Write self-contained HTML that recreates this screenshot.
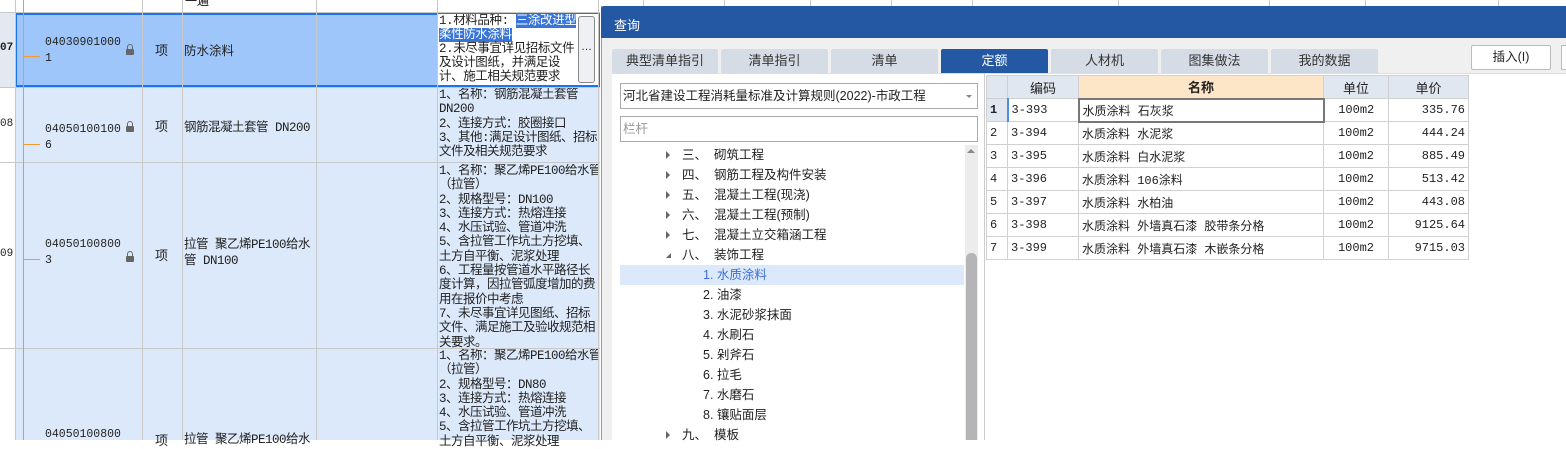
<!DOCTYPE html>
<html><head><meta charset="utf-8"><style>
*{margin:0;padding:0;box-sizing:border-box}
body{width:1566px;height:440px;overflow:hidden;background:#fff;font-family:"Liberation Sans","Noto Sans CJK SC",sans-serif;font-size:12px;color:#222;position:relative}
.a{position:absolute}
.m{font-family:"Liberation Mono","Noto Sans CJK SC",monospace;}
.vl{position:absolute;width:1px;background:#c8c8c8}
.hl{position:absolute;height:1px;background:#c8c8c8}
.desc{position:absolute;left:439px;font-size:12.5px;line-height:14.3px;font-family:"Liberation Mono","Noto Sans CJK SC",monospace;letter-spacing:-0.5px;white-space:nowrap;overflow:hidden;width:159px}
.lock{position:absolute;width:8px;height:6px;background:#666;border-radius:1px}
.lock:before{content:"";position:absolute;left:1px;top:-5px;width:4px;height:5px;border:1px solid #666;border-bottom:none;border-radius:3px 3px 0 0}
.tab{position:absolute;top:49px;height:24px;background:#d6dce6;text-align:center;line-height:24px;font-size:13px;color:#333;border-radius:2px 2px 0 0}
.tr{position:absolute;font-size:12.5px;height:20px;line-height:20px}
.tri{position:absolute;width:0;height:0;border-top:4px solid transparent;border-bottom:4px solid transparent;border-left:4px solid #666;top:6px}
.g td{border:1px solid #d0d0d0;height:23px;padding:0 3px;font-size:12px}
</style></head><body>
<div class="a" style="left:15px;top:13px;width:585px;height:427px;background:#dce9fb"></div>
<div class="a" style="left:0;top:13px;width:15px;height:74px;background:#e4e8f0"></div>
<div class="a" style="left:15px;top:13px;width:585px;height:74px;background:#9fc6fa;border:2px solid #1a73f0"></div>
<div class="a" style="left:437px;top:14px;width:162px;height:71px;background:#fff"></div>
<div class="vl" style="left:15px;top:0;height:440px"></div>
<div class="vl" style="left:142px;top:0;height:440px"></div>
<div class="vl" style="left:182px;top:0;height:440px"></div>
<div class="vl" style="left:316px;top:0;height:440px"></div>
<div class="vl" style="left:437px;top:0;height:440px"></div>
<div class="vl" style="left:598px;top:0;height:440px"></div>
<div class="hl" style="left:0;top:12px;width:600px"></div>
<div class="hl" style="left:0;top:87px;width:600px"></div>
<div class="hl" style="left:0;top:162px;width:600px"></div>
<div class="hl" style="left:0;top:348px;width:600px"></div>
<div class="a" style="left:23px;top:0;width:1px;height:440px;background:#f39a2e;z-index:2"></div>
<div class="a" style="left:185px;top:-8px;font-size:12px">一遍</div>
<div class="a m" style="left:0;top:42px;font-weight:bold;font-size:11px">07</div>
<div class="a m" style="left:0;top:118px;font-size:11px">08</div>
<div class="a m" style="left:0;top:248px;font-size:11px">09</div>
<div class="a" style="left:24px;top:56px;width:16px;height:1px;background:#f39a2e;z-index:2"></div>
<div class="a" style="left:24px;top:144px;width:16px;height:1px;background:#f39a2e;z-index:2"></div>
<div class="a" style="left:24px;top:259px;width:16px;height:1px;background:#f39a2e;z-index:2"></div>
<div class="a m" style="left:45px;top:35px;font-size:11.5px;line-height:16px">04030901000<br>1</div>
<div class="a m" style="left:45px;top:122px;font-size:11.5px;line-height:16px">04050100100<br>6</div>
<div class="a m" style="left:45px;top:237px;font-size:11.5px;line-height:16px">04050100800<br>3</div>
<div class="a m" style="left:45px;top:427px;font-size:11.5px;line-height:16px">04050100800</div>
<div class="lock" style="left:126px;top:49px"></div>
<div class="lock" style="left:126px;top:126px"></div>
<div class="lock" style="left:126px;top:256px"></div>
<div class="a" style="left:155px;top:40px;font-size:13px">项</div>
<div class="a" style="left:155px;top:116px;font-size:13px">项</div>
<div class="a" style="left:155px;top:245px;font-size:13px">项</div>
<div class="a" style="left:155px;top:430px;font-size:13px">项</div>
<div class="a" style="left:184px;top:40px;font-size:12.5px">防水涂料</div>
<div class="a m" style="left:184px;top:116px;font-size:12.5px;letter-spacing:-0.5px">钢筋混凝土套管 DN200</div>
<div class="a m" style="left:184px;top:237px;font-size:12.5px;line-height:16px;letter-spacing:-0.5px">拉管 聚乙烯PE100给水<br>管 DN100</div>
<div class="a m" style="left:184px;top:428px;font-size:12.5px;letter-spacing:-0.5px">拉管 聚乙烯PE100给水</div>
<div class="desc" style="top:14px;width:138px;line-height:14px;font-size:12.5px;letter-spacing:-0.4px">1.材料品种: <span style="background:#3875d7;color:#fff">三涂改进型</span><br><span style="background:#3875d7;color:#fff">柔性防水涂料</span><br>2.未尽事宜详见招标文件<br>及设计图纸，并满足设<br>计、施工相关规范要求</div>
<div class="a" style="left:578px;top:16px;width:17px;height:67px;border:1px solid #888;border-radius:3px;background:#eef0f4;text-align:center;line-height:60px;font-size:11px">…</div>
<div class="desc" style="top:88px">1、名称：钢筋混凝土套管<br>DN200<br>2、连接方式：胶圈接口<br>3、其他:满足设计图纸、招标<br>文件及相关规范要求</div>
<div class="desc" style="top:164px">1、名称：聚乙烯PE100给水管<br>（拉管）<br>2、规格型号：DN100<br>3、连接方式：热熔连接<br>4、水压试验、管道冲洗<br>5、含拉管工作坑土方挖填、<br>土方自平衡、泥浆处理<br>6、工程量按管道水平路径长<br>度计算，因拉管弧度增加的费<br>用在报价中考虑<br>7、未尽事宜详见图纸、招标<br>文件、满足施工及验收规范相<br>关要求。</div>
<div class="desc" style="top:349px">1、名称：聚乙烯PE100给水管<br>（拉管）<br>2、规格型号：DN80<br>3、连接方式：热熔连接<br>4、水压试验、管道冲洗<br>5、含拉管工作坑土方挖填、<br>土方自平衡、泥浆处理</div>
<div class="vl" style="left:643px;top:0;height:7px"></div>
<div class="vl" style="left:724px;top:0;height:7px"></div>
<div class="vl" style="left:810px;top:0;height:7px"></div>
<div class="vl" style="left:891px;top:0;height:7px"></div>
<div class="vl" style="left:972px;top:0;height:7px"></div>
<div class="vl" style="left:1118px;top:0;height:7px"></div>
<div class="vl" style="left:1269px;top:0;height:7px"></div>
<div class="vl" style="left:1365px;top:0;height:7px"></div>
<div class="vl" style="left:1498px;top:0;height:7px"></div>
<div class="a" style="left:601px;top:6px;width:965px;height:434px;background:#f0f0f0;border-left:1px solid #999;z-index:3"></div>
<div style="position:absolute;left:0;top:0;width:1566px;height:440px;z-index:4">
<div class="a" style="left:601px;top:6px;width:965px;height:32px;background:#2558a3;border-radius:3px 0 0 0"></div>
<div class="a" style="left:614px;top:15px;color:#fff;font-size:13px">查询</div>
<div class="tab" style="left:612px;width:106px">典型清单指引</div>
<div class="tab" style="left:721px;width:107px">清单指引</div>
<div class="tab" style="left:831px;width:107px">清单</div>
<div class="tab" style="left:941px;width:107px;background:#2558a3;color:#fff">定额</div>
<div class="tab" style="left:1051px;width:107px">人材机</div>
<div class="tab" style="left:1161px;width:107px">图集做法</div>
<div class="tab" style="left:1271px;width:107px">我的数据</div>
<div class="a" style="left:1471px;top:45px;width:80px;height:25px;border:1px solid #bbb;border-radius:2px;background:#fff;text-align:center;line-height:23px;font-size:12.5px">插入(I)</div>
<div class="a" style="left:1561px;top:45px;width:10px;height:25px;border:1px solid #bbb;background:#fff"></div>
<div class="a" style="left:612px;top:73px;width:954px;height:367px;background:#fff"></div>
<div class="hl" style="left:612px;top:73px;width:954px;background:#ddd"></div>
<div class="a" style="left:620px;top:83px;width:358px;height:26px;border:1px solid #aaa;font-size:12.5px;line-height:24px;padding-left:2px">河北省建设工程消耗量标准及计算规则(2022)-市政工程</div>
<div class="a" style="left:966px;top:95px;border-left:3px solid transparent;border-right:3px solid transparent;border-top:3px solid #888"></div>
<div class="a" style="left:620px;top:116px;width:358px;height:26px;border:1px solid #aaa;font-size:12.5px;line-height:24px;padding-left:2px;color:#999">栏杆</div>
<div class="a" style="left:965px;top:145px;width:13px;height:295px;background:#ececec"></div>
<div class="a" style="left:966px;top:253px;width:11px;height:187px;background:#b5b5b8;border-radius:5px 5px 0 0"></div>
<div class="a" style="left:967px;top:149px;border-left:4px solid transparent;border-right:4px solid transparent;border-bottom:4px solid #888"></div>
<div class="a" style="left:620px;top:265px;width:344px;height:20px;background:#dce9fb"></div>
<div class="tr" style="left:666px;top:145px"><i class="tri"></i><span style="margin-left:16px">三、&nbsp; 砌筑工程</span></div>
<div class="tr" style="left:666px;top:165px"><i class="tri"></i><span style="margin-left:16px">四、&nbsp; 钢筋工程及构件安装</span></div>
<div class="tr" style="left:666px;top:185px"><i class="tri"></i><span style="margin-left:16px">五、&nbsp; 混凝土工程(现浇)</span></div>
<div class="tr" style="left:666px;top:205px"><i class="tri"></i><span style="margin-left:16px">六、&nbsp; 混凝土工程(预制)</span></div>
<div class="tr" style="left:666px;top:225px"><i class="tri"></i><span style="margin-left:16px">七、&nbsp; 混凝土立交箱涵工程</span></div>
<div class="tr" style="left:666px;top:245px"><i class="a" style="left:0;top:8px;border-left:5px solid transparent;border-bottom:5px solid #666"></i><span style="margin-left:16px">八、&nbsp; 装饰工程</span></div>
<div class="tr" style="left:703px;top:265px;color:#3a6fd8">1. 水质涂料</div>
<div class="tr" style="left:703px;top:285px">2. 油漆</div>
<div class="tr" style="left:703px;top:305px">3. 水泥砂浆抹面</div>
<div class="tr" style="left:703px;top:325px">4. 水刷石</div>
<div class="tr" style="left:703px;top:345px">5. 剁斧石</div>
<div class="tr" style="left:703px;top:365px">6. 拉毛</div>
<div class="tr" style="left:703px;top:385px">7. 水磨石</div>
<div class="tr" style="left:703px;top:405px">8. 镶贴面层</div>
<div class="tr" style="left:666px;top:425px"><i class="tri"></i><span style="margin-left:16px">九、&nbsp; 模板</span></div>
<div class="vl" style="left:984px;top:73px;height:367px;background:#ccc"></div>
<table class="g a" style="left:986px;top:75px;border-collapse:collapse;font-family:'Liberation Mono','Noto Sans CJK SC',monospace">
<tr style="background:#e1e7f0;font-size:13px"><td style="width:21px;height:22px"></td><td style="width:71px;text-align:center;font-size:13px">编码</td><td style="width:245px;text-align:center;background:#fde6c7;font-weight:bold;font-size:13px">名称</td><td style="width:65px;text-align:center;font-size:13px">单位</td><td style="width:80px;text-align:center;font-size:13px">单价</td></tr>
<tr><td style="background:#e1e7f0;font-weight:bold">1</td><td style="border-left:2px solid #4a90e2">3-393</td><td style="border:2px solid #777">水质涂料 石灰浆</td><td style="text-align:center">100m2</td><td style="text-align:right">335.76</td></tr>
<tr><td>2</td><td>3-394</td><td>水质涂料 水泥浆</td><td style="text-align:center">100m2</td><td style="text-align:right">444.24</td></tr>
<tr><td>3</td><td>3-395</td><td>水质涂料 白水泥浆</td><td style="text-align:center">100m2</td><td style="text-align:right">885.49</td></tr>
<tr><td>4</td><td>3-396</td><td>水质涂料 106涂料</td><td style="text-align:center">100m2</td><td style="text-align:right">513.42</td></tr>
<tr><td>5</td><td>3-397</td><td>水质涂料 水柏油</td><td style="text-align:center">100m2</td><td style="text-align:right">443.08</td></tr>
<tr><td>6</td><td>3-398</td><td>水质涂料 外墙真石漆 胶带条分格</td><td style="text-align:center">100m2</td><td style="text-align:right">9125.64</td></tr>
<tr><td>7</td><td>3-399</td><td>水质涂料 外墙真石漆 木嵌条分格</td><td style="text-align:center">100m2</td><td style="text-align:right">9715.03</td></tr>
</table>
</div>
</body></html>
